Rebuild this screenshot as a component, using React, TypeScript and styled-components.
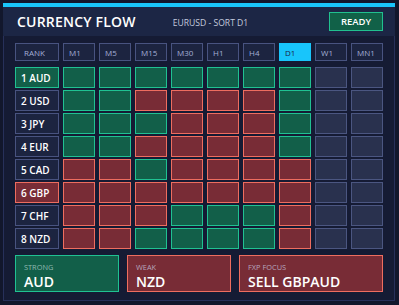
import React from "react";
import styled, { createGlobalStyle, css } from "styled-components";

const Global = createGlobalStyle`
  html, body { margin: 0; padding: 0; background: #12172c; }
  body { font-family: "Open Sans", "DejaVu Sans", sans-serif; }
`;

type Tone = "up" | "down" | "flat" | "plain";

const toneStyles = {
  up: css`background: #125f49; border-color: #20c192;`,
  down: css`background: #782c36; border-color: #ee6d5f;`,
  flat: css`background: #29314e; border-color: #4b5681;`,
  plain: css`background: #1c2440; border-color: #485380;`,
};

const Page = styled.div`
  padding: 3px 4px 0 3px;
  width: 392px;
`;

const Panel = styled.div`
  display: flex;
  flex-direction: column;
  border-top: 4px solid #19c6fb;
  height: 294px;
  background: #151b34;
`;

const Header = styled.div`
  display: flex;
  align-items: center;
  height: 29px;
  padding: 0 12px 0 14px;
  background: #1c2645;
`;

const Title = styled.div`
  color: #ffffff;
  font-size: 14px;
  font-weight: 600;
  letter-spacing: 0.2px;
`;

const Sub = styled.div`
  color: #c3cade;
  font-size: 8.6px;
  margin-left: 37px;
  margin-top: 2px;
`;

const Spacer = styled.div`
  flex: 1;
`;

const Ready = styled.div`
  box-sizing: border-box;
  width: 54px;
  height: 19px;
  display: flex;
  align-items: center;
  justify-content: center;
  background: #116148;
  border: 1px solid #21c08f;
  color: #ffffff;
  font-size: 9.5px;
  font-weight: 600;
`;

const Body = styled.div`
  flex: 1;
  display: flex;
  flex-direction: column;
  padding: 7px 11px 8px 11px;
  border: 1px solid #27305a;
  border-top: none;
`;

const GridRow = styled.div<{ $head?: boolean }>`
  display: grid;
  grid-template-columns: 44px repeat(9, 32px);
  column-gap: 4px;
  height: ${(p) => (p.$head ? 18 : 21)}px;
  margin-bottom: ${(p) => (p.$head ? 6 : 2)}px;
`;

const HeadCell = styled.div<{ $active?: boolean; $pad?: number }>`
  box-sizing: border-box;
  display: flex;
  align-items: center;
  padding-left: ${(p) => p.$pad ?? 5}px;
  border: 1px solid #485380;
  background: #1c2440;
  color: #a3afd6;
  font-size: 8px;
  ${(p) =>
    p.$active &&
    css`
      background: #18c5fb;
      border-color: #18c5fb;
      color: #1a2445;
    `}
`;

const RankCell = styled.div<{ $tone: Tone }>`
  box-sizing: border-box;
  display: flex;
  align-items: center;
  padding-left: 5px;
  border: 1px solid;
  ${(p) => toneStyles[p.$tone]}
  color: #ffffff;
  font-size: 10px;
  font-weight: 600;
`;

const Cell = styled.div<{ $tone: Tone }>`
  box-sizing: border-box;
  border: 1px solid;
  ${(p) => toneStyles[p.$tone]}
`;

const Cards = styled.div`
  display: grid;
  grid-template-columns: 104px 104px 1fr;
  column-gap: 8px;
  margin-top: 4px;
  height: 37px;
`;

const Card = styled.div<{ $tone: Tone; $label: string }>`
  box-sizing: border-box;
  display: flex;
  flex-direction: column;
  padding: 7px 0 0 8px;
  border: 1px solid;
  ${(p) => toneStyles[p.$tone]}
`;

const CardLabel = styled.div<{ $color: string }>`
  color: ${(p) => p.$color};
  font-size: 7.4px;
  line-height: 9px;
`;

const CardValue = styled.div`
  color: #ffffff;
  font-size: 14px;
  font-weight: 600;
  line-height: 17px;
  margin-top: 1px;
`;

const frames = ["M1", "M5", "M15", "M30", "H1", "H4", "D1", "W1", "MN1"];

const rows: { label: string; tone: Tone; cells: string }[] = [
  { label: "1 AUD", tone: "up", cells: "GGGGGGG" },
  { label: "2 USD", tone: "plain", cells: "GGRRRRG" },
  { label: "3 JPY", tone: "plain", cells: "GGGRRRG" },
  { label: "4 EUR", tone: "plain", cells: "GGRRRRG" },
  { label: "5 CAD", tone: "plain", cells: "RRGRRRR" },
  { label: "6 GBP", tone: "down", cells: "RRRRRRR" },
  { label: "7 CHF", tone: "plain", cells: "RRRGGGR" },
  { label: "8 NZD", tone: "plain", cells: "RRGGGGR" },
];

export default function App() {
  return (
    <>
      <Global />
      <Page>
        <Panel>
          <Header>
            <Title>CURRENCY FLOW</Title>
            <Sub>EURUSD - SORT D1</Sub>
            <Spacer />
            <Ready>READY</Ready>
          </Header>
          <Body>
            <GridRow $head>
              <HeadCell $pad={8}>RANK</HeadCell>
              {frames.map((f) => (
                <HeadCell key={f} $active={f === "D1"}>
                  {f}
                </HeadCell>
              ))}
            </GridRow>
            {rows.map((r) => (
              <GridRow key={r.label}>
                <RankCell $tone={r.tone}>{r.label}</RankCell>
                {frames.map((f, i) => {
                  const c = r.cells[i];
                  const tone: Tone = c === "G" ? "up" : c === "R" ? "down" : "flat";
                  return <Cell key={f} $tone={tone} />;
                })}
              </GridRow>
            ))}
            <Cards>
              <Card $tone="up" $label="STRONG">
                <CardLabel $color="#8fb9b0">STRONG</CardLabel>
                <CardValue>AUD</CardValue>
              </Card>
              <Card $tone="down" $label="WEAK">
                <CardLabel $color="#b6a5bd">WEAK</CardLabel>
                <CardValue>NZD</CardValue>
              </Card>
              <Card $tone="down" $label="FXP FOCUS">
                <CardLabel $color="#b6a5bd">FXP FOCUS</CardLabel>
                <CardValue>SELL GBPAUD</CardValue>
              </Card>
            </Cards>
          </Body>
        </Panel>
      </Page>
    </>
  );
}
